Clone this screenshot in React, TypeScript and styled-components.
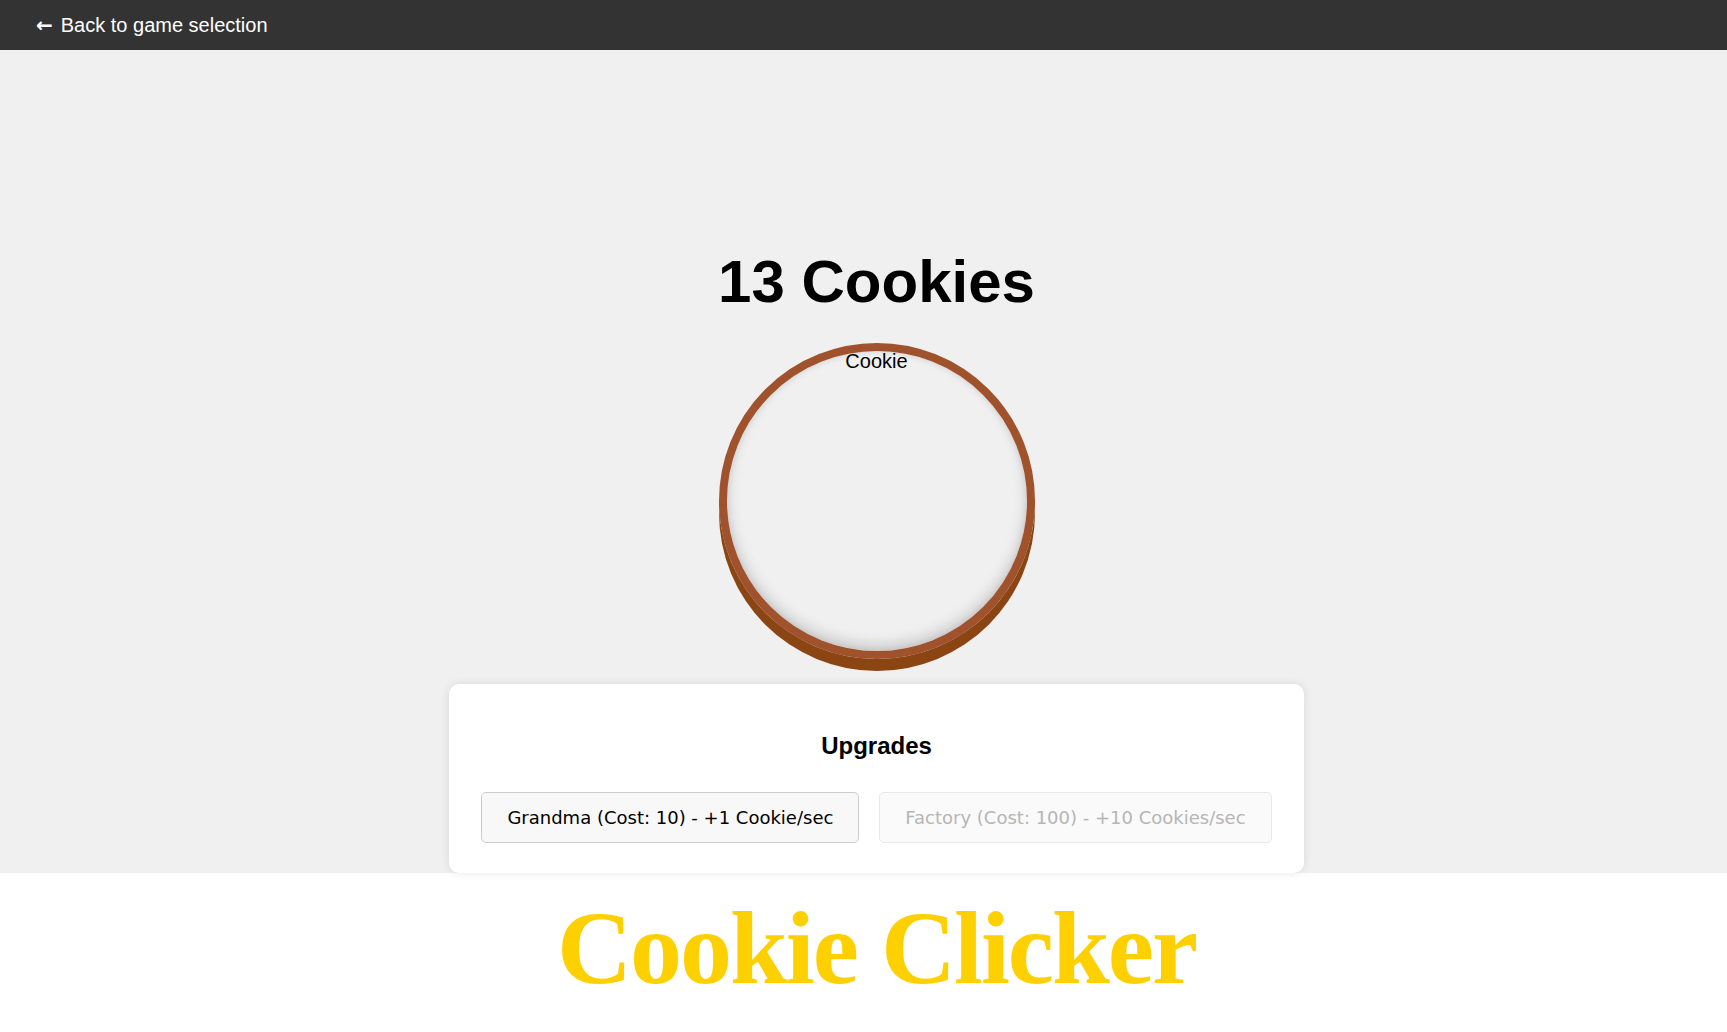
import React from "react";
import styled, { createGlobalStyle } from "styled-components";

const GlobalStyle = createGlobalStyle`
  html, body {
    margin: 0;
    padding: 0;
    background: #ffffff;
  }
  body {
    font-family: "Liberation Sans", Arial, sans-serif;
  }
`;

const TopBar = styled.header`
  height: 50px;
  background: #333333;
  display: flex;
  align-items: center;
  padding-left: 36px;
`;

const BackLink = styled.a`
  color: #ffffff;
  font-family: "Liberation Sans", Arial, sans-serif;
  font-size: 20px;
  text-decoration: none;
  cursor: pointer;
  display: flex;
  align-items: center;
  gap: 8px;
`;

const Arrow = styled.span`
  font-family: "DejaVu Sans", sans-serif;
  font-size: 20px;
  font-weight: 700;
  line-height: 1;
`;

const Main = styled.main`
  height: 823px;
  box-sizing: border-box;
  background: #f0f0f0;
  display: flex;
  flex-direction: column;
  align-items: center;
  justify-content: flex-end;
  padding-left: 26px;
`;

const Count = styled.h1`
  margin: 0 0 27px;
  font-family: "Liberation Sans", Arial, sans-serif;
  font-size: 60px;
  line-height: 69px;
  font-weight: 700;
  color: #000000;
`;

const CookieButton = styled.button`
  width: 316px;
  height: 316px;
  box-sizing: border-box;
  margin: 0 0 25px;
  padding: 0;
  border: 8px solid #a0522d;
  border-radius: 50%;
  background: transparent;
  box-shadow: 0 12px 0 #8b4513, inset 0 -6px 14px rgba(0, 0, 0, 0.16),
    inset 0 0 6px rgba(0, 0, 0, 0.08);
  display: flex;
  justify-content: center;
  align-items: flex-start;
  cursor: pointer;
`;

const CookieLabel = styled.span`
  font-family: "Liberation Sans", Arial, sans-serif;
  font-size: 20px;
  line-height: 20px;
  color: #000000;
`;

const Card = styled.section`
  background: #ffffff;
  border-radius: 10px;
  box-shadow: 0 0 10px rgba(0, 0, 0, 0.1);
  padding: 48px 32px 30px;
  display: flex;
  flex-direction: column;
  align-items: center;
`;

const CardTitle = styled.h2`
  margin: 0 0 32px;
  font-family: "Liberation Sans", Arial, sans-serif;
  font-size: 24px;
  line-height: 28px;
  font-weight: 700;
  color: #000000;
`;

const UpgradeRow = styled.div`
  display: flex;
  gap: 20px;
`;

const UpgradeButton = styled.button`
  font-family: "DejaVu Sans", Verdana, sans-serif;
  font-size: 18px;
  line-height: 21px;
  padding: 14px 25px;
  border-radius: 5px;
  border: 1px solid #cccccc;
  background: #f8f8f8;
  color: #000000;
  white-space: nowrap;
  cursor: pointer;

  &:disabled {
    border-color: #e8e8e8;
    background: #fafafa;
    color: #b5b5b5;
    cursor: not-allowed;
  }
`;

const TitleSection = styled.section`
  height: 159px;
  box-sizing: border-box;
  background: #ffffff;
  display: flex;
  justify-content: center;
  padding: 13px 0 0 26px;
`;

const GameTitle = styled.h1`
  margin: 0;
  font-family: "Liberation Serif", "Times New Roman", serif;
  font-weight: 700;
  font-size: 104px;
  line-height: 124px;
  letter-spacing: -2px;
  color: #ffd000;
`;

const upgrades = [
  { name: "Grandma", cost: 10, rate: "+1 Cookie/sec", affordable: true },
  { name: "Factory", cost: 100, rate: "+10 Cookies/sec", affordable: false },
];

export default function App() {
  const cookies = 13;
  return (
    <>
      <GlobalStyle />
      <TopBar>
        <BackLink>
          <Arrow>←</Arrow>
          Back to game selection
        </BackLink>
      </TopBar>
      <Main>
        <Count>{cookies} Cookies</Count>
        <CookieButton aria-label="Cookie">
          <CookieLabel>Cookie</CookieLabel>
        </CookieButton>
        <Card>
          <CardTitle>Upgrades</CardTitle>
          <UpgradeRow>
            {upgrades.map((u) => (
              <UpgradeButton key={u.name} disabled={!u.affordable}>
                {u.name} (Cost: {u.cost}) - {u.rate}
              </UpgradeButton>
            ))}
          </UpgradeRow>
        </Card>
      </Main>
      <TitleSection>
        <GameTitle>Cookie Clicker</GameTitle>
      </TitleSection>
    </>
  );
}
